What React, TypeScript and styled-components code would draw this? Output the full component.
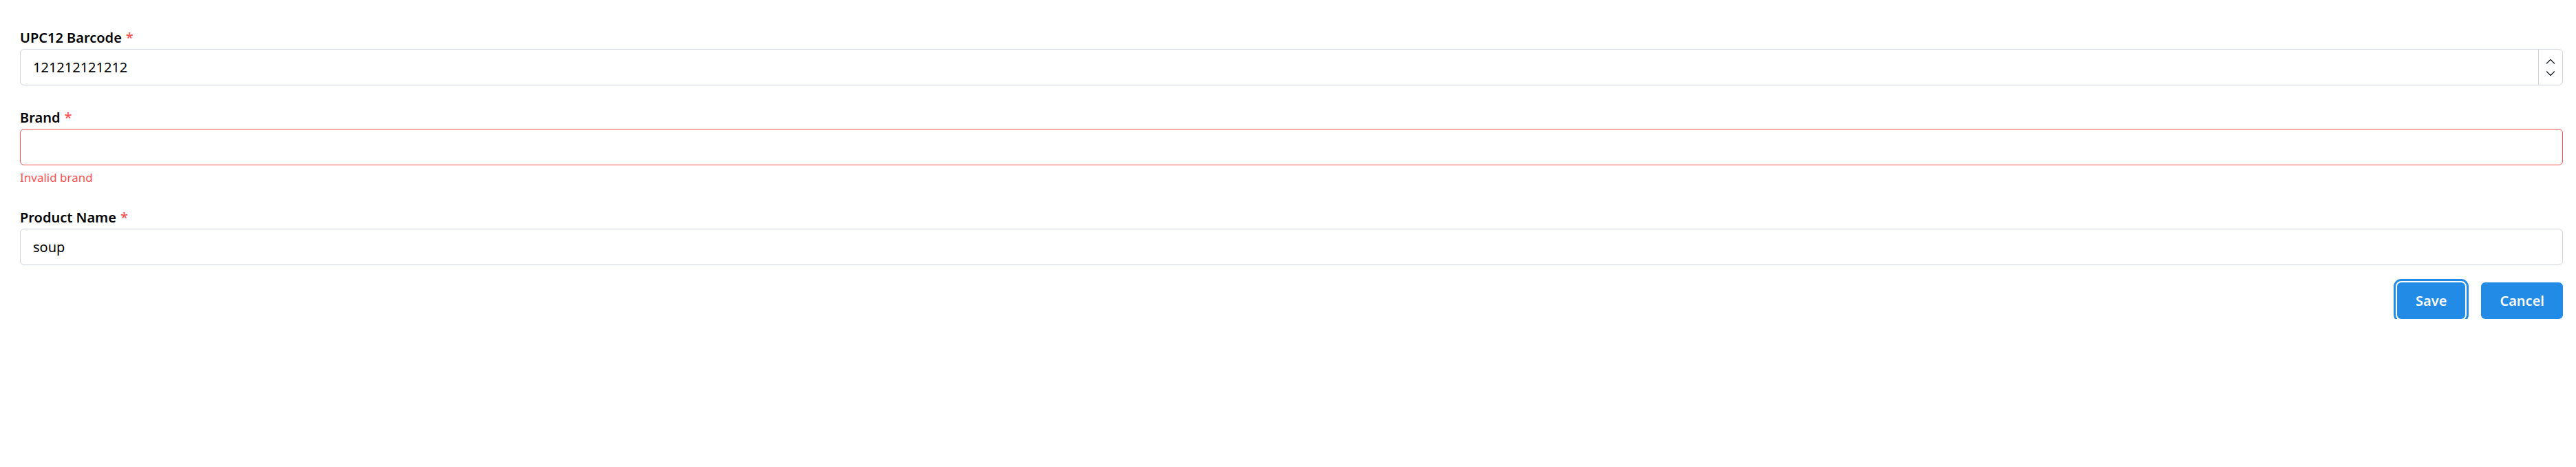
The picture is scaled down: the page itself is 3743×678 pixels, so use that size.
import React from "react";
import styled, { createGlobalStyle } from "styled-components";

const Global = createGlobalStyle`
  html, body { margin: 0; padding: 0; background: #fff; }
  body { font-family: "Noto Sans", "Open Sans", sans-serif; color: #000; }
  * { box-sizing: border-box; }
`;

const Form = styled.form`
  display: flex;
  flex-direction: column;
  gap: 31px;
  padding: 39px 19px 0 29px;
`;

const Field = styled.div`
  display: flex;
  flex-direction: column;
`;

const Label = styled.label`
  font-size: 20px;
  font-weight: 600;
  line-height: 32px;
  color: #000;
`;

const Required = styled.span`
  color: #fa5252;
  margin-left: 6px;
  font-weight: 500;
`;

const InputWrap = styled.div<{ $error?: boolean }>`
  display: flex;
  align-items: stretch;
  height: 53px;
  border: 1.5px solid ${(p) => (p.$error ? "#fa5252" : "#ced4da")};
  border-radius: 6px;
  background: #fff;
  overflow: hidden;
`;

const Input = styled.input`
  flex: 1;
  min-width: 0;
  border: none;
  outline: none;
  background: transparent;
  padding: 0 18px;
  font-family: inherit;
  font-size: 20px;
  color: #000;
`;

const Spinner = styled.div`
  width: 35px;
  display: flex;
  flex-direction: column;
  align-items: center;
  justify-content: center;
  gap: 10px;
  border-left: 1px solid #ced4da;
`;

const ErrorText = styled.div`
  margin-top: 7px;
  font-size: 17px;
  line-height: 22px;
  color: #fa5252;
`;

const Actions = styled.div`
  display: flex;
  justify-content: flex-end;
  gap: 23px;
  margin-top: -6px;
`;

const Button = styled.button<{ $focused?: boolean }>`
  height: 53px;
  padding: 0 27px;
  border: none;
  border-radius: 6px;
  background: #228be6;
  color: #fff;
  font-family: inherit;
  font-size: 20px;
  font-weight: 600;
  cursor: pointer;
  outline: ${(p) => (p.$focused ? "3px solid #228be6" : "none")};
  outline-offset: 2px;
`;

const Chevron = ({ up }: { up?: boolean }) => (
  <svg width="14" height="8" viewBox="0 0 14 8" fill="none">
    <path
      d={up ? "M1.5 7 L7 1.5 L12.5 7" : "M1.5 1 L7 6.5 L12.5 1"}
      stroke="#212529"
      strokeWidth="1.4"
      strokeLinecap="round"
      strokeLinejoin="round"
    />
  </svg>
);

export default function App() {
  return (
    <>
      <Global />
      <Form onSubmit={(e) => e.preventDefault()}>
        <Field>
          <Label>
            UPC12 Barcode<Required>*</Required>
          </Label>
          <InputWrap>
            <Input defaultValue="121212121212" />
            <Spinner>
              <Chevron up />
              <Chevron />
            </Spinner>
          </InputWrap>
        </Field>
        <Field>
          <Label>
            Brand<Required>*</Required>
          </Label>
          <InputWrap $error>
            <Input defaultValue="" />
          </InputWrap>
          <ErrorText>Invalid brand</ErrorText>
        </Field>
        <Field>
          <Label>
            Product Name<Required>*</Required>
          </Label>
          <InputWrap>
            <Input defaultValue="soup" />
          </InputWrap>
        </Field>
        <Actions>
          <Button $focused type="submit">Save</Button>
          <Button type="button">Cancel</Button>
        </Actions>
      </Form>
    </>
  );
}
